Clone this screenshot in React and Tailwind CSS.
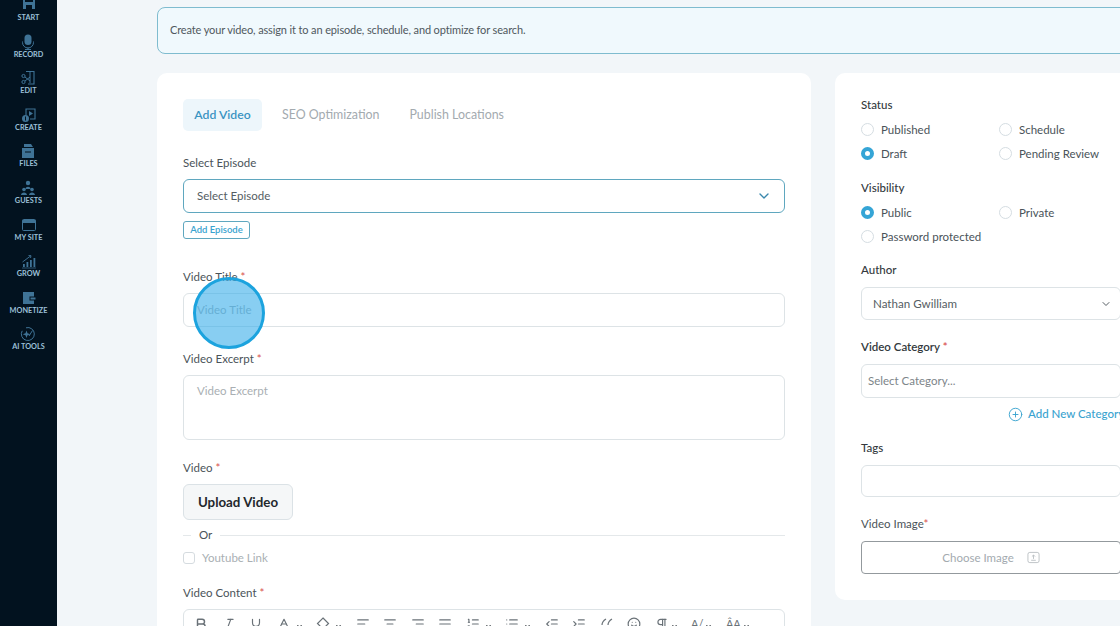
import React from 'react';
import { ChevronDown, Bold, Italic, Underline, Baseline, AlignLeft, AlignCenter, AlignRight, AlignJustify, List, ListOrdered, IndentIncrease, IndentDecrease, Smile, Pilcrow, CirclePlus } from 'lucide-react';

const FONT = 'font-["Lato","Noto_Sans",sans-serif]';

const icons = {
    START: (
        <>
            <path d="M2 -1h2v6h8v-6h2v13h-12z" />
            <path d="M5 8h6v4h-6z" fill="#02121f" />
        </>
    ),
    RECORD: (
        <>
            <rect x="4.500" y="0.500" width="7" height="10.500" rx="3.500" />
            <path d="M2.500 7.500v1a5.500 5.500 0 0 0 11 0v-1" fill="none" stroke="currentColor" strokeWidth="1" />
            <path d="M8 13.500v1.500M5 15.500h6" stroke="currentColor" strokeWidth="1" />
        </>
    ),
    EDIT: (
        <>
            <path d="M6 1.5h8v12.5h-6" fill="none" stroke="currentColor" strokeWidth="1.1" />
            <path d="M10 2v11" stroke="currentColor" strokeWidth="1" />
            <circle cx="3.5" cy="6" r="1.6" fill="none" stroke="currentColor" strokeWidth="1" />
            <circle cx="3.5" cy="12" r="1.6" fill="none" stroke="currentColor" strokeWidth="1" />
            <path d="M5 7l5 4M5 11l5-4" stroke="currentColor" strokeWidth="1" />
        </>
    ),
    CREATE: (
        <>
            <path d="M5 8v-6h9v10h-5" fill="none" stroke="currentColor" strokeWidth="1.1" />
            <path d="M8 4l4 2.5-4 2.5z" />
            <circle cx="4.5" cy="11.5" r="3.5" />
            <path d="M4.5 9.5v4" stroke="#02121f" strokeWidth="1" />
        </>
    ),
    FILES: (
        <>
            <path d="M4 1h7l2 3h-9z" />
            <path d="M2 5h12v10h-12z" />
            <path d="M5 9h6" stroke="#02121f" strokeWidth="1" />
        </>
    ),
    GUESTS: (
        <>
            <circle cx="8" cy="3" r="2.2" />
            <path d="M5.5 9c0-3 5-3 5 0z" />
            <circle cx="4" cy="9.5" r="1.8" />
            <circle cx="12" cy="9.5" r="1.8" />
            <path d="M1 15c0-3.500 6-3.500 6 0zM9 15c0-3.500 6-3.500 6 0z" />
        </>
    ),
    'MY SITE': (
        <>
            <rect x="1.500" y="2.500" width="13" height="11" rx="1" fill="none" stroke="currentColor" strokeWidth="1" />
            <path d="M1.500 3h13v3h-13z" />
        </>
    ),
    GROW: (
        <>
            <path d="M2 14h1.800v-3h-1.800zM5.500 14h1.800v-5h-1.800zM9 14h1.800v-7h-1.800zM12.500 14h1.800v-9h-1.800z" />
            <path d="M1.500 9l8-6M7.500 2.500l2.500.2-.5 2.300" fill="none" stroke="currentColor" strokeWidth="0.9" />
            <path d="M1 15h14" stroke="currentColor" strokeWidth="0.7" />
        </>
    ),
    MONETIZE: (
        <>
            <path d="M2 2h11v12h-11z" />
            <path d="M8.500 6.500h6v4h-6z" fill="#02121f" />
            <path d="M9.500 7.500h5v2h-5z" />
        </>
    ),
    'AI TOOLS': (
        <>
            <path d="M6 1.800a6.500 6.500 0 1 1-3.800 3" fill="none" stroke="currentColor" strokeWidth="1" />
            <path d="M6.500 4.500l1 2.800 2.800 1-2.800 1-1 2.800-1-2.800-2.800-1 2.800-1z" />
            <path d="M9 10l3.500-5.500" stroke="currentColor" strokeWidth="1" />
        </>
    ),
};

const NAV = ['START', 'RECORD', 'EDIT', 'CREATE', 'FILES', 'GUESTS', 'MY SITE', 'GROW', 'MONETIZE', 'AI TOOLS'];

function Sidebar() {
    return (
        <aside className="w-[57px] shrink-0 bg-[#02121f] flex flex-col items-center">
            {NAV.map((name, i) => (
                <div key={name} className={`flex flex-col items-center h-[36.6px] shrink-0 ${i === 0 ? '-mt-[9px]' : ''}`}>
                    <svg viewBox="0 0 16 16" className="w-[16px] h-[16px] mt-[6px] text-[#3f7396]" fill="currentColor">
                        {icons[name]}
                    </svg>
                    <span className={`${FONT} text-[7.3px] leading-[10px] font-bold text-[#9cc0d8] whitespace-nowrap`}>{name}</span>
                </div>
            ))}
        </aside>
    );
}

const Req = () => <span className="text-[#d9534f]"> *</span>;

function Label({ children, className = '' }) {
    return <div className={`h-[16px] pt-[1px] text-[11.5px] leading-[16px] text-[#4a5359] ${className}`}>{children}</div>;
}

function Radio({ label, checked }) {
    return (
        <div className="flex items-center gap-[7px] h-[24.500px]">
            {checked ? (
                <span className="w-[13px] h-[13px] rounded-full border-[4px] border-[#35a5d6] bg-white" />
            ) : (
                <span className="w-[13px] h-[13px] rounded-full border border-[#d5dde2] bg-white" />
            )}
            <span className="text-[11.5px] text-[#4a5359] whitespace-nowrap">{label}</span>
        </div>
    );
}

function Caret() {
    return <ChevronDown className="w-[7px] h-[7px] text-[#3d4449] mt-[4px]" strokeWidth={4} />;
}

function Toolbar() {
    const t = 'w-[14px] h-[14px] text-[#6a7278]';
    const group = 'flex items-center gap-[5px]';
    return (
        <div className="flex items-center pl-[10px] h-[28px] gap-[13.500px]">
            <Bold className={t} strokeWidth={2.500} />
            <Italic className={t} />
            <Underline className={t} />
            <span className={group}><Baseline className={t} /><Caret /></span>
            <span className={group}>
                <svg viewBox="0 0 14 14" className={t} fill="none" stroke="currentColor" strokeWidth="1.200">
                    <path d="M7 1l5.500 5.500-5.500 5.500-5.500-5.500z" />
                </svg>
                <Caret />
            </span>
            <AlignLeft className={t} />
            <AlignCenter className={t} />
            <AlignRight className={t} />
            <AlignJustify className={t} />
            <span className={group}><ListOrdered className={t} /><Caret /></span>
            <span className={group}><List className={t} /><Caret /></span>
            <IndentDecrease className={t} />
            <IndentIncrease className={t} />
            <svg viewBox="0 0 14 14" className={t} fill="none" stroke="currentColor" strokeWidth="1.200">
                <path d="M6 2c-2.500 1.500-4 3.500-4 6M12 2c-2.500 1.500-4 3.500-4 6" />
            </svg>
            <Smile className={t} />
            <span className="flex items-center gap-[2px]"><Pilcrow className={t} /><Caret /></span>
            <span className="flex items-center gap-[2px]"><span className="text-[11px] text-[#6a7278]">A/</span><Caret /></span>
            <span className="flex items-center gap-[2px]"><span className="text-[11px] text-[#6a7278]">ÂA</span><Caret /></span>
        </div>
    );
}

function MainCard() {
    return (
        <section className="w-[654px] shrink-0 h-[600px] bg-white rounded-[10px] pl-[26px] pr-[26px] pt-[26px]">
            <div className="flex items-center h-[32px] pt-[1px]">
                <div className="h-[32px] w-[79px] -mt-[1px] pt-[1px] rounded-[5px] bg-[#edf6fb] flex items-center justify-center text-[12.2px] font-semibold text-[#3a93c2]">Add Video</div>
                <div className="text-[12.4px] text-[#a3aaaf] ml-[20px]">SEO Optimization</div>
                <div className="text-[12.4px] text-[#a3aaaf] ml-[30px]">Publish Locations</div>
            </div>
            <Label className="mt-[23px]">Select Episode</Label>
            <div className="mt-[9px] h-[34px] rounded-[6px] border border-[#5fa7bf] flex items-center justify-between pl-[13px] pr-[12px]">
                <span className="text-[11.5px] text-[#555d63]">Select Episode</span>
                <ChevronDown className="w-[16px] h-[16px] text-[#3a88ad]" strokeWidth={2} />
            </div>
            <div className="mt-[8px] w-[67px] h-[18px] rounded-[3px] border border-[#5fa7bf] flex items-center justify-center text-[9.500px] font-semibold text-[#3aa3cf] whitespace-nowrap">Add Episode</div>
            <Label className="mt-[29px]">Video Title<Req /></Label>
            <div className="mt-[9px] h-[34px] rounded-[6px] border border-[#dde3e6] flex items-center pl-[13px] text-[11.5px] text-[#a9afb3]">Video Title</div>
            <Label className="mt-[23px]">Video Excerpt<Req /></Label>
            <div className="mt-[9px] h-[65px] rounded-[6px] border border-[#dde3e6] pl-[13px] pt-[6px] text-[11.5px] text-[#a9afb3]">Video Excerpt</div>
            <Label className="mt-[19px]">Video<Req /></Label>
            <div className="mt-[9px] w-[110px] h-[36px] pt-[1px] rounded-[6px] border border-[#dbe2e6] bg-[#f5f7f8] flex items-center justify-center text-[13.3px] font-bold text-[#23282c]">Upload Video</div>
            <div className="flex items-center mt-[7px] h-[16px]">
                <div className="w-[8px] h-px bg-[#e4e8ea]" />
                <span className="text-[11.5px] text-[#4a5359] mx-[8px]">Or</span>
                <div className="flex-1 h-px bg-[#e4e8ea]" />
            </div>
            <div className="flex items-center gap-[7px] mt-[7px] h-[16px]">
                <span className="w-[12px] h-[12px] rounded-[3px] border border-[#d5dbdf]" />
                <span className="text-[11.5px] text-[#a9afb3]">Youtube Link</span>
            </div>
            <Label className="mt-[18px]">Video Content<Req /></Label>
            <div className="mt-[9px] h-[80px] rounded-[6px] border border-[#dde3e6]">
                <Toolbar />
            </div>
        </section>
    );
}

function SideCard() {
    return (
        <section className="w-[312px] shrink-0 h-[527px] bg-white rounded-[10px] pl-[26px] pt-[24px]">
            <div className="text-[11.5px] leading-[16px] font-medium text-[#33393d]">Status</div>
            <div className="grid grid-cols-[138px_138px] mt-[4px]">
                <Radio label="Published" />
                <Radio label="Schedule" />
                <Radio label="Draft" checked />
                <Radio label="Pending Review" />
            </div>
            <div className="text-[11.5px] leading-[16px] font-medium text-[#33393d] mt-[14px]">Visibility</div>
            <div className="grid grid-cols-[138px_138px] mt-[4px]">
                <Radio label="Public" checked />
                <Radio label="Private" />
                <Radio label="Password protected" />
            </div>
            <div className="text-[11.5px] leading-[16px] font-medium text-[#33393d] mt-[13px]">Author</div>
            <div className="mt-[9px] w-[260px] h-[33px] rounded-[6px] border border-[#dde3e6] flex items-center justify-between pl-[11px] pr-[8px]">
                <span className="text-[11.6px] text-[#555d63]">Nathan Gwilliam</span>
                <ChevronDown className="w-[12px] h-[12px] text-[#555d63]" />
            </div>
            <div className="text-[11.5px] leading-[16px] font-semibold text-[#33393d] mt-[19px]">Video Category<Req /></div>
            <div className="mt-[9px] w-[260px] h-[34px] rounded-[6px] border border-[#dde3e6] flex items-center pl-[6px] text-[11.5px] text-[#7d8589]">Select Category...</div>
            <div className="flex items-center gap-[5px] pl-[147px] mt-[7px] h-[18px] whitespace-nowrap">
                <CirclePlus className="w-[15px] h-[15px] text-[#3aa3cf]" strokeWidth={1.500} />
                <span className="text-[11.5px] font-medium text-[#3aa3cf]">Add New Category</span>
            </div>
            <div className="text-[11.5px] leading-[16px] font-medium text-[#33393d] mt-[17px]">Tags</div>
            <div className="mt-[9px] w-[260px] h-[32px] rounded-[6px] border border-[#dde3e6]" />
            <div className="text-[11.5px] leading-[16px] text-[#4a5359] mt-[19px]">Video Image<span className="text-[#d9534f]">*</span></div>
            <div className="mt-[9px] w-[260px] h-[33px] rounded-[4px] border border-[#93999d] flex items-center justify-center gap-[13px]">
                <span className="text-[11.5px] text-[#a3aaaf]">Choose Image</span>
                <svg viewBox="0 0 14 14" className="w-[13px] h-[13px] text-[#b3b9bd]" fill="none" stroke="currentColor" strokeWidth="0.9">
                    <rect x="1" y="1.500" width="12" height="11" rx="2" />
                    <path d="M7 8.500v-4M5.300 6l1.700-1.700 1.700 1.700M4.500 10h5" />
                </svg>
            </div>
        </section>
    );
}

export default function App() {
    return (
        <div className={`relative w-[1120px] h-[626px] overflow-hidden bg-[#f2f6f9] flex ${FONT}`}>
            <Sidebar />
            <main className="pl-[100px] pt-[7px] flex flex-col">
                <div className="w-[1000px] h-[47px] shrink-0 rounded-[8px] border border-[#7fbccf] bg-[#f0f9fd] flex items-center pl-[12px] text-[11px] tracking-[-0.13px] text-[#4f585e]">
                    Create your video, assign it to an episode, schedule, and optimize for search.
                </div>
                <div className="flex gap-[24px] mt-[19px] items-start">
                    <MainCard />
                    <SideCard />
                </div>
            </main>
            <div className="absolute left-[193px] top-[277px] w-[72px] h-[72px] rounded-full border-[3px] border-[#1ca3de] bg-[#38aeea]/60" />
        </div>
    );
}
